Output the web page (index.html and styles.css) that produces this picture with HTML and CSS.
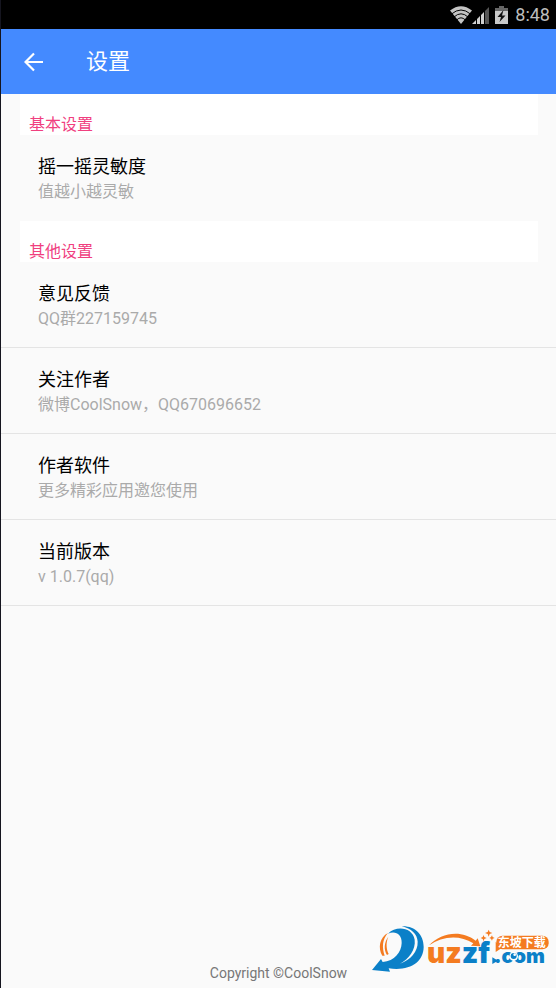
FILE: index.html
```html
<!DOCTYPE html>
<html lang="zh-CN">
<head>
<meta charset="utf-8">
<meta name="viewport" content="width=device-width, initial-scale=1">
<title>设置</title>
<link rel="stylesheet" href="styles.css">
</head>
<body>
<div class="status-bar">
  <svg class="icon-wifi" viewBox="0 0 22 18" width="22" height="18" aria-hidden="true">
    <path d="M0 4.600Q11-4 22 4.600L11 18Z" fill="#c4c4c4"/>
    <path d="M1.500 8Q11 0 20.500 8M4 11Q11 4.600 18 11M6.600 14Q11 9.600 15.400 14" fill="none" stroke="#000" stroke-width="1"/>
  </svg>
  <svg class="icon-signal" viewBox="0 0 18 18" width="18" height="18" aria-hidden="true">
    <path d="M0 18 4 14V18ZM5 18V13L8 10V18ZM9 18V9L12 6V18Z" fill="#d0d0d0"/>
    <path d="M13 18V5L17 1V18Z" fill="#555"/>
  </svg>
  <svg class="icon-battery" viewBox="0 0 13 18" width="13" height="18" aria-hidden="true">
    <path d="M4 0H9V2H13V5H0V2H4Z" fill="#666"/>
    <path d="M0 5H13V18H0Z" fill="#c9c9c9"/>
    <path d="M8.500 4 2.500 11H6L4.500 16 10.500 9.500H7Z" fill="#111"/>
  </svg>
  <span class="clock">8:48</span>
</div>
<header class="app-bar">
  <button class="back" type="button" aria-label="返回">
    <svg viewBox="0 0 20 20" width="20" height="20" aria-hidden="true">
      <path d="M19 10H2M10 1.500 1.500 10 10 18.500" fill="none" stroke="#fff" stroke-width="2.200"/>
    </svg>
  </button>
  <h1>设置</h1>
</header>
<main>
  <section>
    <h2>基本设置</h2>
    <ul>
      <li><h3>摇一摇灵敏度</h3><p>值越小越灵敏</p></li>
    </ul>
  </section>
  <section>
    <h2>其他设置</h2>
    <ul class="divided">
      <li><h3>意见反馈</h3><p>QQ群227159745</p></li>
      <li><h3>关注作者</h3><p>微博CoolSnow，QQ670696652</p></li>
      <li><h3>作者软件</h3><p>更多精彩应用邀您使用</p></li>
      <li><h3>当前版本</h3><p>v 1.0.7(qq)</p></li>
    </ul>
  </section>
</main>
<footer>Copyright ©CoolSnow</footer>
<svg class="watermark" viewBox="0 0 588 219" width="196" height="73" role="img" aria-label="uzzf.com 东坡下载">
  <path d="M125 34C164 32 191 58 191 96C190 142 150 169 86 160L90 170L36 165L63 132L68 141C104 138 124 112 125 84C126 58 106 46 84 56C110 30 158 38 164 74C168 104 146 132 120 146C152 134 174 110 173 80C172 58 154 40 125 34Z" fill="#0b80c8"/>
  <path d="M84 54C59 66 53 99 67 122L74 122C66 98 66 74 84 54Z" fill="#f47b20"/>
  <path d="M85 65C72 82 71 104 81 120L86 117C79 102 77 84 85 65Z" fill="#f47b20"/>
  <path d="M207 91C242 54 302 42 347 77L353 70L361 94L333 92L340 85C298 58 247 63 207 91Z" fill="#f47b20"/>
  <path d="M386 44 389 51 397 54 389 57 386 65 383 57 375 54 383 51ZM371 60 373 66 380 69 373 72 371 79 368 72 362 69 368 66ZM396 61 398 66 404 69 398 71 396 77 393 71 388 69 393 66Z" fill="#f47b20"/>
  <rect x="409" y="62" width="157" height="41" rx="18" fill="#f47b20"/>
  <path d="M407 80V111L425 99Z" fill="#f47b20"/>
  <text class="brand" x="201" y="144"><tspan class="orange">uz</tspan><tspan class="blue">zf</tspan></text>
  <path d="M397 127 414 137 397 147Z" fill="#0b80c8"/>
  <text class="brand-com" x="402" y="144">.com</text>
  <circle cx="461" cy="124" r="13" fill="#fff"/>
  <circle cx="461" cy="123" r="9" fill="#0b80c8"/>
  <circle cx="464" cy="119" r="4" fill="#fff"/>
  <text class="brand-cn" x="413" y="95">东坡下载</text>
</svg>
</body>
</html>
```
FILE: styles.css
```css
* {
  box-sizing: border-box;
}

body {
  margin: 0;
  min-height: 100vh;
  display: flex;
  flex-direction: column;
  position: relative;
  border-left: 1px solid #15151f;
  background: #fafafa;
  font-family: Roboto, "Noto Sans CJK SC", sans-serif;
}

h1, h2, h3, p, ul {
  margin: 0;
  padding: 0;
  font-weight: 400;
}

ul {
  list-style: none;
}

.status-bar {
  display: flex;
  align-items: center;
  justify-content: flex-end;
  height: 29px;
  padding-right: 6px;
  background: #000;
}

.icon-battery {
  margin: 0 7px 0 5px;
}

.clock {
  color: #bdbdbd;
  font-size: 18px;
  line-height: 28px;
}

.app-bar {
  display: flex;
  align-items: center;
  gap: 42px;
  height: 65px;
  padding-left: 23px;
  background: #448aff;
  color: #fff;
}

.back {
  display: flex;
  padding: 0;
  border: 0;
  background: none;
}

h1 {
  font-size: 22px;
  line-height: 32px;
}

h2 {
  margin: 0 18px 0 19px;
  padding: 21px 9px 0;
  background: #fff;
  color: #f0407f;
  font-size: 16px;
  line-height: 20px;
}

li {
  min-height: 86px;
  padding: 19px 37px 16px;
}

.divided li {
  border-bottom: 1px solid #e4e4e4;
}

h3 {
  color: #000;
  font-size: 18px;
  line-height: 26px;
}

p {
  color: #aaa;
  font-size: 16px;
  line-height: 24px;
}

footer {
  margin-top: auto;
  padding-bottom: 5px;
  color: #777;
  font-size: 14px;
  line-height: 20px;
  text-align: center;
}

.watermark {
  position: absolute;
  right: 0;
  bottom: 0;
}

.brand,
.brand-com,
.brand-cn {
  font-family: Inter, "Noto Sans CJK SC", sans-serif;
  font-weight: 900;
}

.brand {
  font-size: 84px;
}

.brand-com {
  fill: #0b80c8;
  font-size: 60px;
}

.brand-cn {
  fill: #fff;
  font-size: 36px;
  font-weight: 700;
}

.orange {
  fill: #f47b20;
}

.blue {
  fill: #0b80c8;
}
```
